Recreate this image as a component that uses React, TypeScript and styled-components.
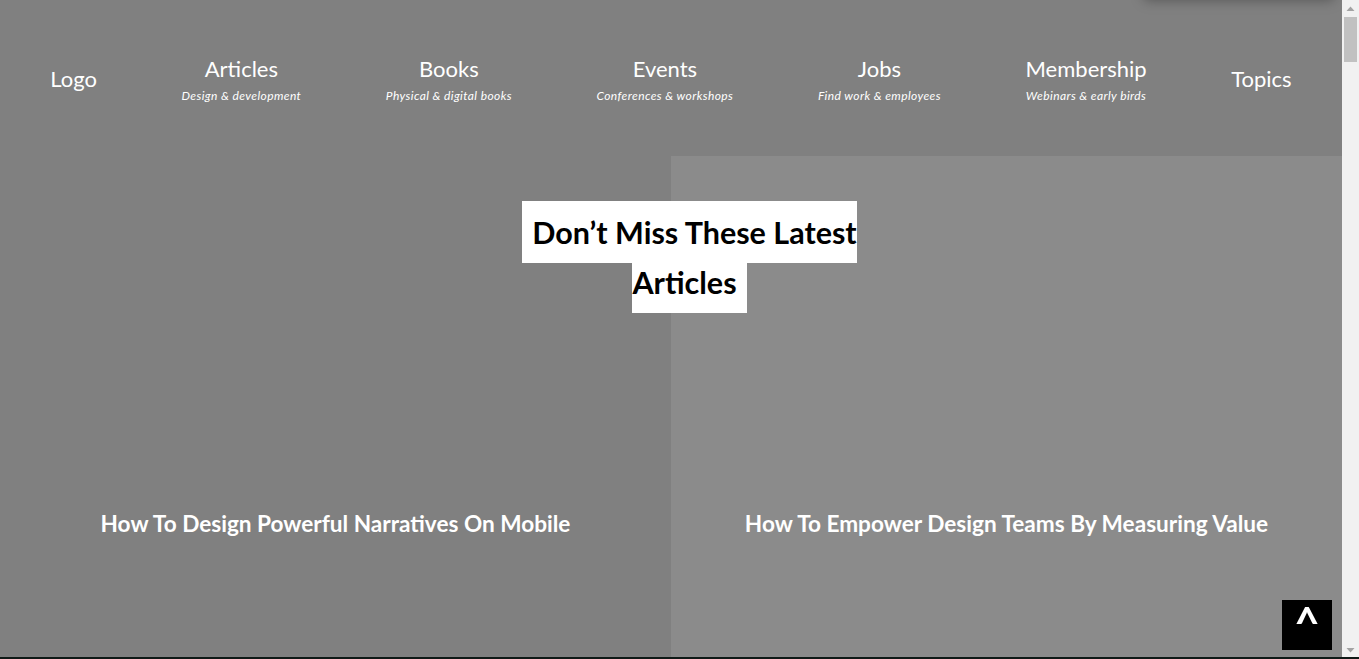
import React from "react";
import styled, { createGlobalStyle } from "styled-components";

const GlobalStyle = createGlobalStyle`
  html, body {
    margin: 0;
    padding: 0;
  }
  body {
    font-family: Lato, "Open Sans", "Liberation Sans", sans-serif;
    background: #808080;
    color: #fff;
    overflow: hidden;
  }
`;

const Page = styled.div`
  margin-right: 17px;
`;

const Header = styled.header`
  position: relative;
  height: 156px;
  background: #808080;
`;

const MenuShadow = styled.div`
  position: absolute;
  top: -200px;
  right: 8px;
  width: 190px;
  height: 200px;
  background: #808080;
  box-shadow: 0 0 12px rgba(0, 0, 0, 0.35);
`;

const Nav = styled.nav`
  height: 100%;
  display: flex;
  justify-content: space-around;
  align-items: center;
  padding: 1px 8px 0;
  box-sizing: border-box;
`;

const NavItem = styled.a`
  display: flex;
  flex-direction: column;
  align-items: center;
  color: #fff;
  text-decoration: none;
`;

const NavTitle = styled.span`
  font-size: 22px;
  line-height: 28px;
`;

const NavSub = styled.span`
  font-size: 12px;
  font-style: italic;
  letter-spacing: 0.4px;
  margin-top: 6px;
  line-height: 14px;
`;

const Main = styled.main`
  position: relative;
`;

const Grid = styled.div`
  display: grid;
  grid-template-columns: 1fr 1fr;
`;

const Card = styled.article<{ $light: boolean }>`
  height: 734px;
  display: flex;
  align-items: center;
  justify-content: center;
  background: ${(p) => (p.$light ? "#8b8b8b" : "#808080")};
`;

const CardTitle = styled.h3`
  margin: 0;
  font-size: 22.6px;
  font-weight: 700;
  color: #fff;
  text-align: center;
`;

const Overlay = styled.div`
  position: absolute;
  top: 51px;
  left: 0;
  right: 0;
  display: flex;
  justify-content: center;
  padding-left: 37px;
`;

const Heading = styled.h2`
  width: 350px;
  margin: 0;
  text-align: center;
  font-size: 30.5px;
  line-height: 50px;
  font-weight: 700;
`;

const HeadingMark = styled.span`
  background: #fff;
  color: #000;
  padding: 13px 10px;
`;

const TopButton = styled.a`
  position: fixed;
  right: 27px;
  bottom: 9px;
  width: 50px;
  height: 50px;
  background: #000;
  color: #fff;
  display: flex;
  justify-content: center;
  font-size: 44px;
  font-weight: 700;
  line-height: 44px;
  text-decoration: none;
`;

const Scrollbar = styled.div`
  position: fixed;
  top: 0;
  right: 0;
  bottom: 0;
  width: 17px;
  background: #f1f1f1;
  display: flex;
  flex-direction: column;
  align-items: center;
  justify-content: space-between;
`;

const ScrollArrow = styled.svg`
  display: block;
  width: 17px;
  height: 17px;
  fill: #a3a3a3;
`;

const ScrollThumb = styled.div`
  position: absolute;
  top: 17px;
  left: 2px;
  width: 13px;
  height: 45px;
  background: #c1c1c1;
`;

const BottomEdge = styled.div`
  position: fixed;
  left: 0;
  right: 0;
  bottom: 0;
  height: 2px;
  background: #0f1a17;
`;

const navItems = [
  { title: "Articles", sub: "Design & development" },
  { title: "Books", sub: "Physical & digital books" },
  { title: "Events", sub: "Conferences & workshops" },
  { title: "Jobs", sub: "Find work & employees" },
  { title: "Membership", sub: "Webinars & early birds" },
];

const articles = [
  "How To Design Powerful Narratives On Mobile",
  "How To Empower Design Teams By Measuring Value",
];

export default function App() {
  return (
    <>
      <GlobalStyle />
      <Page>
        <Header>
          <MenuShadow />
          <Nav>
            <NavItem href="#">
              <NavTitle>Logo</NavTitle>
            </NavItem>
            {navItems.map((item) => (
              <NavItem key={item.title} href="#">
                <NavTitle>{item.title}</NavTitle>
                <NavSub>{item.sub}</NavSub>
              </NavItem>
            ))}
            <NavItem href="#">
              <NavTitle>Topics</NavTitle>
            </NavItem>
          </Nav>
        </Header>
        <Main>
          <Overlay>
            <Heading>
              <HeadingMark>Don’t Miss These Latest Articles</HeadingMark>
            </Heading>
          </Overlay>
          <Grid>
            {articles.map((title, i) => (
              <Card key={title} $light={i % 2 === 1}>
                <CardTitle>{title}</CardTitle>
              </Card>
            ))}
          </Grid>
        </Main>
      </Page>
      <TopButton href="#">^</TopButton>
      <Scrollbar>
        <ScrollArrow viewBox="0 0 17 17">
          <path d="M4.5 11 L8.5 6.5 L12.5 11 Z" />
        </ScrollArrow>
        <ScrollThumb />
        <ScrollArrow viewBox="0 0 17 17">
          <path d="M4.5 6 L8.5 10.5 L12.5 6 Z" />
        </ScrollArrow>
      </Scrollbar>
      <BottomEdge />
    </>
  );
}
